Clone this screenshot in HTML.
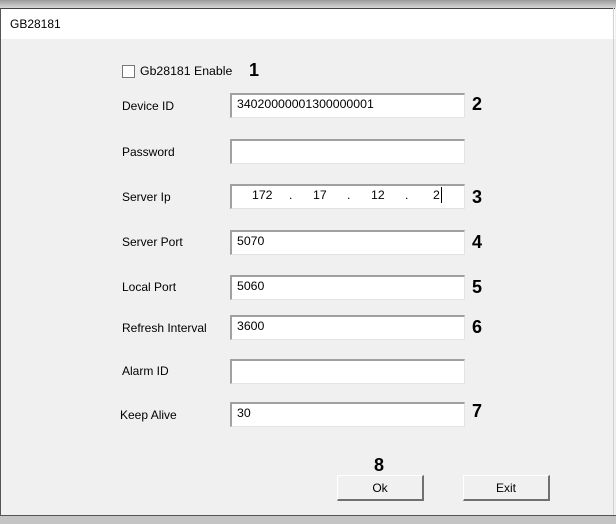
<!DOCTYPE html>
<html><head><style>
body{margin:0;width:616px;height:523px;overflow:hidden;background:#f0f0f0;font-family:"Liberation Sans",sans-serif;font-size:12px;position:relative;color:#000}
div{position:absolute}
.top{left:0;top:0;width:616px;height:8px;background:linear-gradient(#9a9a9a,#d8d8d8)}
.title{left:0;top:8px;width:614px;height:30px;background:#fff;border-top:1px solid #444;border-left:1px solid #555}
.lbl{left:122px}
.in{left:230px;background:#fff;border-top:2px solid #a0a0a0;border-left:2px solid #a0a0a0;border-right:1px solid #e3e3e3;border-bottom:1px solid #e3e3e3;line-height:19px;padding-left:5px;box-sizing:border-box;width:235px;height:25px;font-size:12.3px}
.n{left:472px;font-weight:bold;font-size:18px}
.btn{width:87px;height:26px;background:#f0f0f0;border-top:1px solid #fff;border-left:1px solid #fff;border-right:2px solid #707070;border-bottom:2px solid #707070;box-sizing:border-box;text-align:center;line-height:24px}
.bot{left:0;top:515px;width:616px;height:8px;background:#c4c4c4;border-top:1px solid #555}
</style></head><body>
<div class="top"></div>
<div class="title"><span style="position:absolute;left:9px;top:8px">GB28181</span></div>
<div style="left:0;top:38px;width:1px;height:478px;background:#555"></div>
<div style="left:613px;top:8px;width:1px;height:508px;background:#d0d0d0"></div>
<div style="left:122px;top:65px;width:11px;height:11px;border:1px solid #777;background:#fff"></div>
<div style="left:140px;top:64px;font-size:12.3px">Gb28181 Enable</div>
<div style="left:249px;top:60px;font-weight:bold;font-size:18px">1</div>
<div class="lbl" style="top:99px">Device ID</div><div class="in" style="top:93px">34020000001300000001</div><div class="n" style="top:94px">2</div>
<div class="lbl" style="top:145px">Password</div><div class="in" style="top:139px"></div>
<div class="lbl" style="top:190px">Server Ip</div><div class="in" style="top:184px"><span style="position:absolute;left:20px">172</span><span style="position:absolute;left:57px">.</span><span style="position:absolute;left:81px">17</span><span style="position:absolute;left:115px">.</span><span style="position:absolute;left:139px">12</span><span style="position:absolute;left:173px">.</span><span style="position:absolute;left:201px">2</span><span style="position:absolute;left:209px;top:1px;width:1px;height:16px;background:#000"></span></div><div class="n" style="top:187px">3</div>
<div class="lbl" style="top:235px">Server Port</div><div class="in" style="top:230px">5070</div><div class="n" style="top:232px">4</div>
<div class="lbl" style="top:280px">Local Port</div><div class="in" style="top:275px">5060</div><div class="n" style="top:277px">5</div>
<div class="lbl" style="top:321px">Refresh Interval</div><div class="in" style="top:315px">3600</div><div class="n" style="top:317px">6</div>
<div class="lbl" style="top:364px">Alarm ID</div><div class="in" style="top:359px"></div>
<div style="left:120px;top:408px">Keep Alive</div><div class="in" style="top:402px">30</div><div class="n" style="top:401px">7</div>
<div style="left:374px;top:455px;font-weight:bold;font-size:18px">8</div>
<div class="btn" style="left:337px;top:475px">Ok</div>
<div class="btn" style="left:463px;top:475px">Exit</div>
<div class="bot"></div>
</body></html>
